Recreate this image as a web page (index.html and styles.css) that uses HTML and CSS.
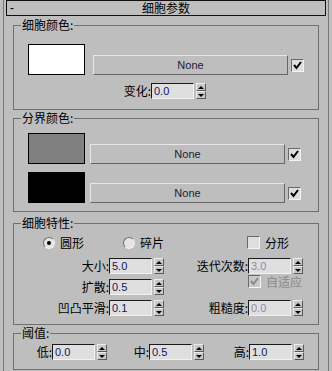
FILE: index.html
```html
<!DOCTYPE html>
<html>
<head>
<meta charset="utf-8">
<link rel="stylesheet" href="styles.css">
</head>
<body>
<div class="panel">
  <div class="head"><span class="minus">-</span><span class="title">细胞参数</span><span class="pad"></span></div>

  <fieldset class="grp g1">
    <legend>细胞颜色:</legend>
    <div class="mrow">
      <div class="swatch white"></div>
      <div class="btn">None</div>
      <span class="chk on"><svg width="11" height="11" viewBox="0 0 11 11"><path d="M2 5 L4.5 8 L9 2" fill="none" stroke="#000" stroke-width="2"/></svg></span>
    </div>
    <div class="frow f1">
      <span class="lbl">变化:</span><span class="num">0.0</span><span class="spin"><i class="up"></i><i class="dn"></i></span>
    </div>
  </fieldset>

  <fieldset class="grp g2">
    <legend>分界颜色:</legend>
    <div class="mrow">
      <div class="swatch grey"></div>
      <div class="btn">None</div>
      <span class="chk on"><svg width="11" height="11" viewBox="0 0 11 11"><path d="M2 5 L4.5 8 L9 2" fill="none" stroke="#000" stroke-width="2"/></svg></span>
    </div>
    <div class="mrow">
      <div class="swatch black"></div>
      <div class="btn">None</div>
      <span class="chk on"><svg width="11" height="11" viewBox="0 0 11 11"><path d="M2 5 L4.5 8 L9 2" fill="none" stroke="#000" stroke-width="2"/></svg></span>
    </div>
  </fieldset>

  <fieldset class="grp g3">
    <legend>细胞特性:</legend>
    <div class="radios">
      <label class="ropt o1"><span class="radio on"></span>圆形</label>
      <label class="ropt o2"><span class="radio"></span>碎片</label>
      <label class="ropt o3"><span class="chk"></span>分形</label>
    </div>
    <div class="grid3">
      <div class="frow lcell"><span class="lbl">大小:</span><span class="num">5.0</span><span class="spin"><i class="up"></i><i class="dn"></i></span></div>
      <div class="frow rcell"><span class="lbl">迭代次数:</span><span class="num dis">3.0</span><span class="spin"><i class="up"></i><i class="dn"></i></span></div>
      <div class="frow lcell"><span class="lbl">扩散:</span><span class="num">0.5</span><span class="spin"><i class="up"></i><i class="dn"></i></span></div>
      <label class="ropt adapt"><span class="chk on dis"><svg width="11" height="11" viewBox="0 0 11 11"><path d="M2 5 L4.5 8 L9 2" fill="none" stroke="#8a8a8a" stroke-width="2"/></svg></span><span class="distext">自适应</span></label>
      <div class="frow lcell"><span class="lbl">凹凸平滑:</span><span class="num">0.1</span><span class="spin"><i class="up"></i><i class="dn"></i></span></div>
      <div class="frow rcell"><span class="lbl">粗糙度:</span><span class="num dis">0.0</span><span class="spin"><i class="up"></i><i class="dn"></i></span></div>
    </div>
  </fieldset>

  <fieldset class="grp g4">
    <legend>阈值:</legend>
    <div class="trow">
      <div class="frow t1"><span class="lbl">低:</span><span class="num">0.0</span><span class="spin"><i class="up"></i><i class="dn"></i></span></div>
      <div class="frow t2"><span class="lbl">中:</span><span class="num">0.5</span><span class="spin"><i class="up"></i><i class="dn"></i></span></div>
      <div class="frow t3"><span class="lbl">高:</span><span class="num">1.0</span><span class="spin"><i class="up"></i><i class="dn"></i></span></div>
    </div>
  </fieldset>
</div>
</body>
</html>
```
FILE: styles.css
```css
html, body {
  margin: 0;
  padding: 0;
}
body {
  background: #bebebe;
  font-family: "Noto Sans CJK SC", sans-serif;
  font-size: 12px;
  color: #000;
  width: 332px;
  height: 371px;
  overflow: hidden;
}
.panel {
  margin-left: 3px;
  width: 326px;
  height: 371px;
  box-sizing: border-box;
  border-left: 1px solid #7a7a7a;
  border-right: 1px solid #7a7a7a;
}
.head {
  margin-left: 2px;
  width: 320px;
  height: 16px;
  box-sizing: border-box;
  border: 1px solid #111;
  display: flex;
  align-items: center;
  line-height: 14px;
  background: #bebebe;
}
.minus {
  width: 24px;
  padding-left: 3px;
  box-sizing: border-box;
  font-family: "Liberation Sans", sans-serif;
  font-size: 12px;
}
.title {
  flex: 1;
  text-align: center;
}
.pad {
  width: 24px;
}
.grp {
  margin: 0 0 0 9px;
  padding: 0;
  width: 306px;
  min-width: 0;
  box-sizing: border-box;
  border: 1px solid #6f6f6f;
}
.grp legend {
  margin-left: 7px;
  padding: 0 1px;
  font-size: 12px;
  line-height: 14px;
}
.g1 { margin-top: 2px; padding-bottom: 10px; }
.g2 { margin-top: 1px; padding-bottom: 8px; }
.g3 { margin-top: 4px; padding-bottom: 8px; }
.g4 { margin-top: 1px; padding-bottom: 9px; }

.mrow {
  display: flex;
  align-items: flex-end;
  margin-left: 14px;
  margin-top: 8px;
}
.g1 .mrow { margin-top: 12px; }
.swatch {
  width: 57px;
  height: 31px;
  box-sizing: border-box;
  border: 1px solid #000;
}
.white { background: #fff; }
.grey { background: #808080; }
.black { background: #000; }
.btn {
  width: 195px;
  height: 20px;
  margin-left: 5px;
  box-sizing: border-box;
  border: 1px solid;
  border-color: #e8e8e8 #666 #666 #e8e8e8;
  display: flex;
  align-items: center;
  justify-content: center;
  font-family: "Liberation Sans", sans-serif;
  font-size: 11px;
  color: #1a1a3a;
}
.g1 .btn { margin-left: 8px; }
.chk {
  width: 13px;
  height: 13px;
  box-sizing: border-box;
  border: 1px solid;
  border-color: #6a6a6a #f4f4f4 #f4f4f4 #6a6a6a;
  background: #dedede;
  display: flex;
  align-items: center;
  justify-content: center;
  flex: none;
}
.chk svg { display: block; }
.mrow .chk {
  margin-left: 3px;
  margin-bottom: 3px;
}
.chk.dis { background: #c8c8c8; }

.frow {
  display: flex;
  align-items: center;
  height: 16px;
}
.lbl {
  text-align: right;
  line-height: 16px;
  white-space: nowrap;
  flex: none;
}
.f1 { margin-top: 8px; margin-left: 97px; }
.f1 .lbl { width: 40px; }
.num {
  width: 43px;
  height: 16px;
  box-sizing: border-box;
  border: 1px solid;
  border-color: #1a1a1a #f2f2f2 #f2f2f2 #1a1a1a;
  background: #dfdfdf;
  font-family: "Liberation Sans", sans-serif;
  font-size: 11px;
  line-height: 14px;
  padding-left: 2px;
  color: #14145e;
  flex: none;
}
.num.dis { color: #8c8ca4; }
.spin {
  width: 10px;
  height: 16px;
  margin-left: 2px;
  display: flex;
  flex-direction: column;
  flex: none;
}
.spin i {
  flex: 1;
  box-sizing: border-box;
  border: 1px solid;
  border-color: #ececec #5a5a5a #5a5a5a #ececec;
  background: #c8c8c8;
  display: flex;
  align-items: center;
  justify-content: center;
}
.spin i::after {
  content: "";
  border-left: 3px solid transparent;
  border-right: 3px solid transparent;
}
.spin i.up::after { border-bottom: 3px solid #000; }
.spin i.dn::after { border-top: 3px solid #000; }

.radios {
  display: flex;
  align-items: center;
  height: 13px;
  margin-top: 6px;
  margin-left: 29px;
}
.ropt {
  display: flex;
  align-items: center;
  gap: 5px;
  line-height: 13px;
}
.o1 { width: 80px; }
.o2 { width: 124px; }
.radio {
  width: 12px;
  height: 12px;
  border-radius: 50%;
  box-sizing: border-box;
  border: 1px solid;
  border-color: #6e6e6e #f0f0f0 #f0f0f0 #6e6e6e;
  background: #e4e4e4;
  display: flex;
  align-items: center;
  justify-content: center;
}
.radio.on::after {
  content: "";
  width: 4px;
  height: 4px;
  border-radius: 50%;
  background: #000;
}
.grid3 {
  display: grid;
  grid-template-columns: 152px 152px;
  grid-auto-rows: 16px;
  row-gap: 5px;
  margin-top: 9px;
}
.lcell .lbl { width: 95px; }
.rcell .lbl { width: 82px; }
.adapt {
  margin-left: 82px;
  margin-top: -4px;
  align-self: start;
  height: 13px;
}
.distext { color: #8a8a8a; }

.trow {
  display: flex;
  margin-top: 4px;
  height: 16px;
}
.t1 .lbl { width: 38px; }
.t2 .lbl { width: 42px; }
.t3 .lbl { width: 45px; }
```
